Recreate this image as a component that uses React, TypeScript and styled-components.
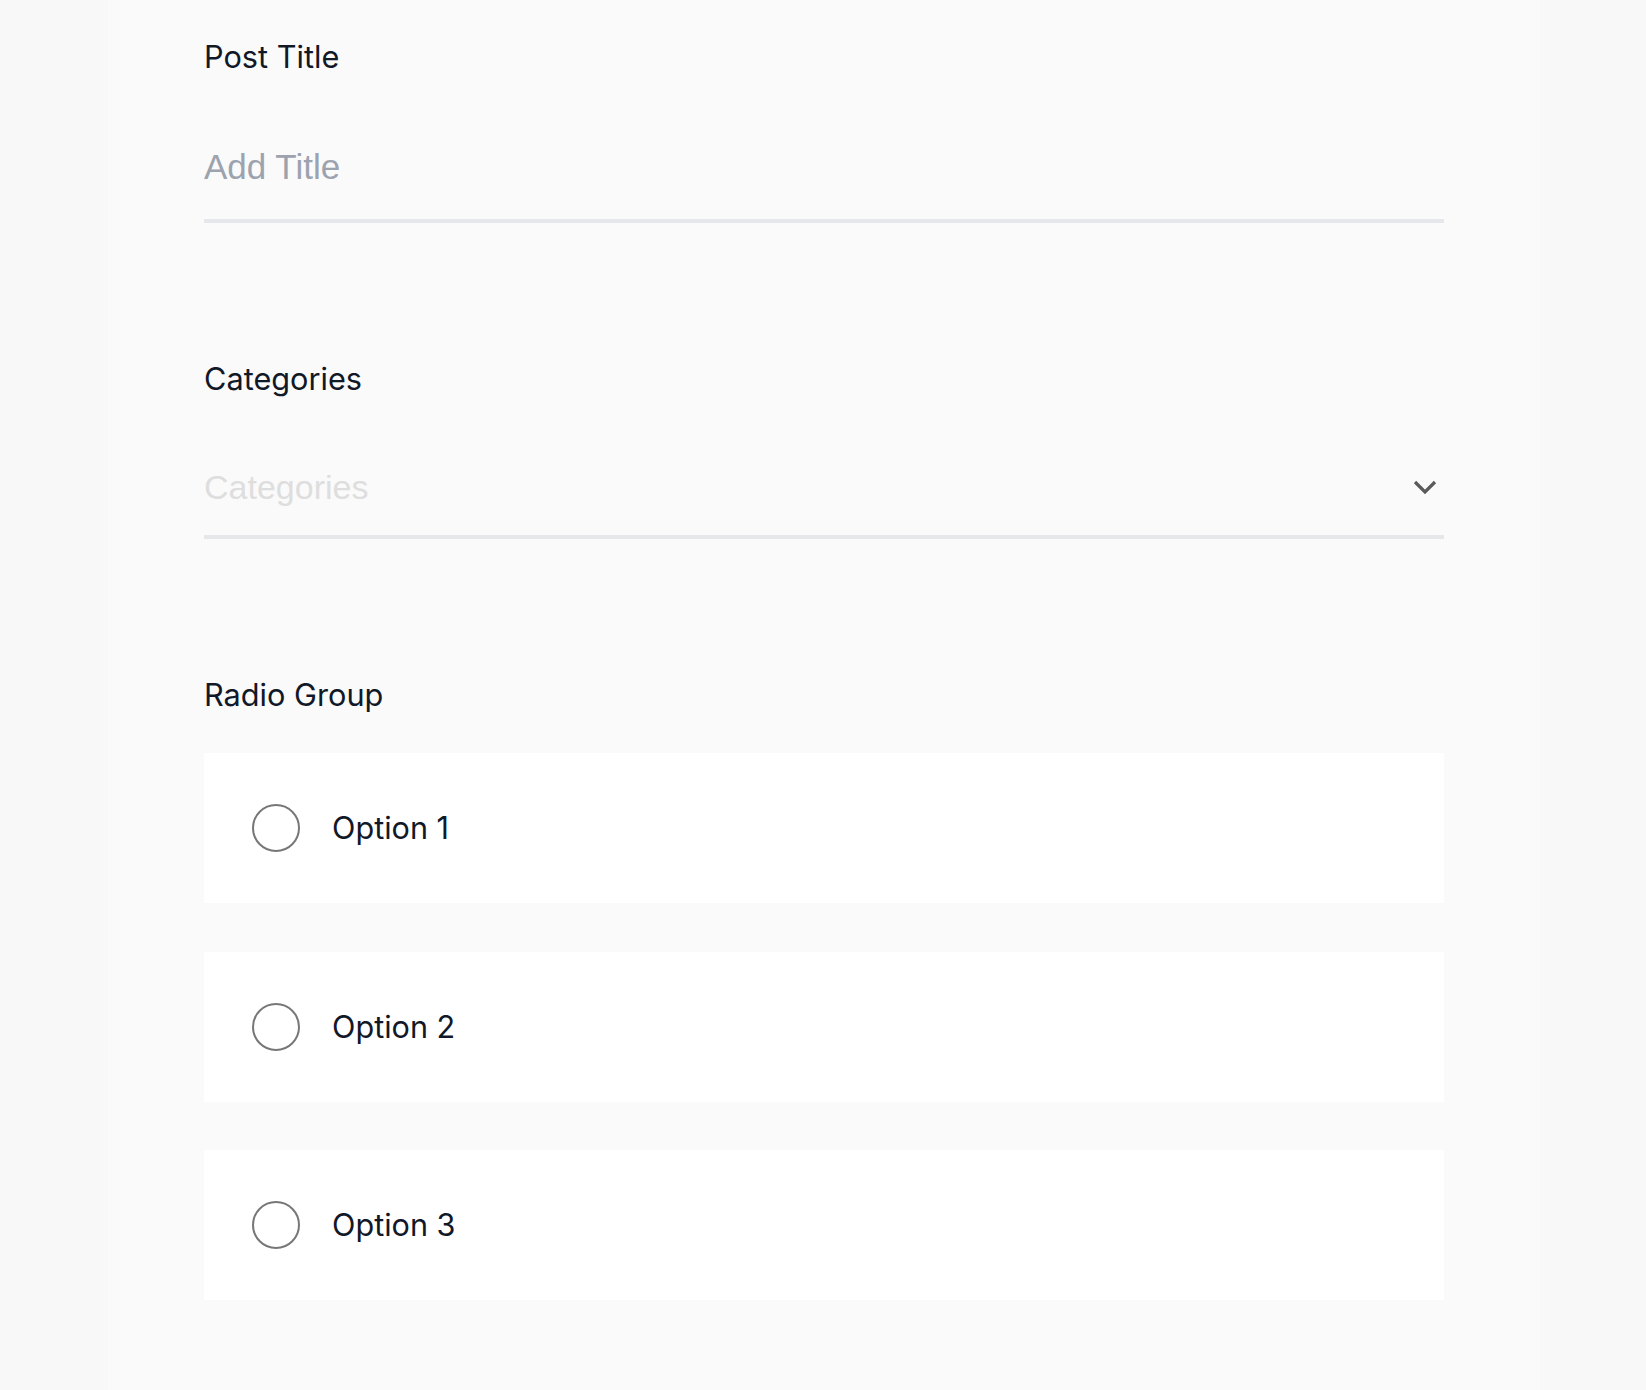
import React from "react";
import styled, { createGlobalStyle } from "styled-components";

const Global = createGlobalStyle`
  html, body { margin: 0; padding: 0; background: #f8f8f8; }
  body { font-family: Inter, "Noto Sans", sans-serif; }
  * { box-sizing: border-box; }
`;

const Page = styled.main`
  width: 1432px;
  min-height: 1390px;
  margin: 0 106px 0 108px;
  background: #fafafa;
  padding: 37px 96px 0;
  display: flex;
  flex-direction: column;
`;

const Section = styled.section<{ $gap: number }>`
  display: flex;
  flex-direction: column;
  margin-bottom: ${(p) => p.$gap}px;
`;

const Label = styled.label`
  display: block;
  font-family: Inter, "Noto Sans", sans-serif;
  font-size: 30.7px;
  line-height: 40px;
  font-weight: 400;
  color: #111827;
`;

const TextInput = styled.input`
  display: block;
  width: 100%;
  height: 108px;
  margin-top: 38px;
  padding: 0;
  border: none;
  border-bottom: 4px solid #e5e7eb;
  background: transparent;
  outline: none;
  font-family: "Liberation Sans", Arial, sans-serif;
  font-size: 35px;
  color: #111827;
  &::placeholder { color: #9ca3af; }
`;

const SelectBox = styled.div`
  display: flex;
  align-items: center;
  justify-content: space-between;
  height: 100px;
  margin-top: 40px;
  padding-right: 7px;
  border-bottom: 4px solid #e5e7eb;
  cursor: pointer;
`;

const SelectPlaceholder = styled.span`
  font-family: "Liberation Sans", Arial, sans-serif;
  font-size: 34px;
  line-height: 38px;
  color: #dedede;
`;

const Chevron = styled.svg`
  display: block;
  width: 24px;
  height: 16px;
  flex: none;
`;

const Options = styled.div`
  display: flex;
  flex-direction: column;
  gap: 48.5px;
  margin-top: 38px;
`;

const OptionCard = styled.label`
  display: flex;
  align-items: center;
  gap: 32px;
  height: 150px;
  padding-left: 48px;
  background: #ffffff;
  cursor: pointer;
`;

const RadioCircle = styled.span`
  display: block;
  width: 48px;
  height: 48px;
  border-radius: 50%;
  border: 2px solid #777777;
  flex: none;
`;

const OptionText = styled.span`
  font-family: Inter, "Noto Sans", sans-serif;
  font-size: 30.6px;
  line-height: 40px;
  color: #111827;
`;

export default function App() {
  return (
    <>
      <Global />
      <Page>
        <Section $gap={136}>
          <Label>Post Title</Label>
          <TextInput placeholder="Add Title" />
        </Section>
        <Section $gap={136}>
          <Label>Categories</Label>
          <SelectBox>
            <SelectPlaceholder>Categories</SelectPlaceholder>
            <Chevron viewBox="0 0 24 16">
              <polyline
                points="2,3 12,13 22,3"
                fill="none"
                stroke="#5b5b5b"
                strokeWidth="3.2"
              />
            </Chevron>
          </SelectBox>
        </Section>
        <Section $gap={0}>
          <Label>Radio Group</Label>
          <Options>
            {["Option 1", "Option 2", "Option 3"].map((o) => (
              <OptionCard key={o}>
                <RadioCircle />
                <OptionText>{o}</OptionText>
              </OptionCard>
            ))}
          </Options>
        </Section>
      </Page>
    </>
  );
}
